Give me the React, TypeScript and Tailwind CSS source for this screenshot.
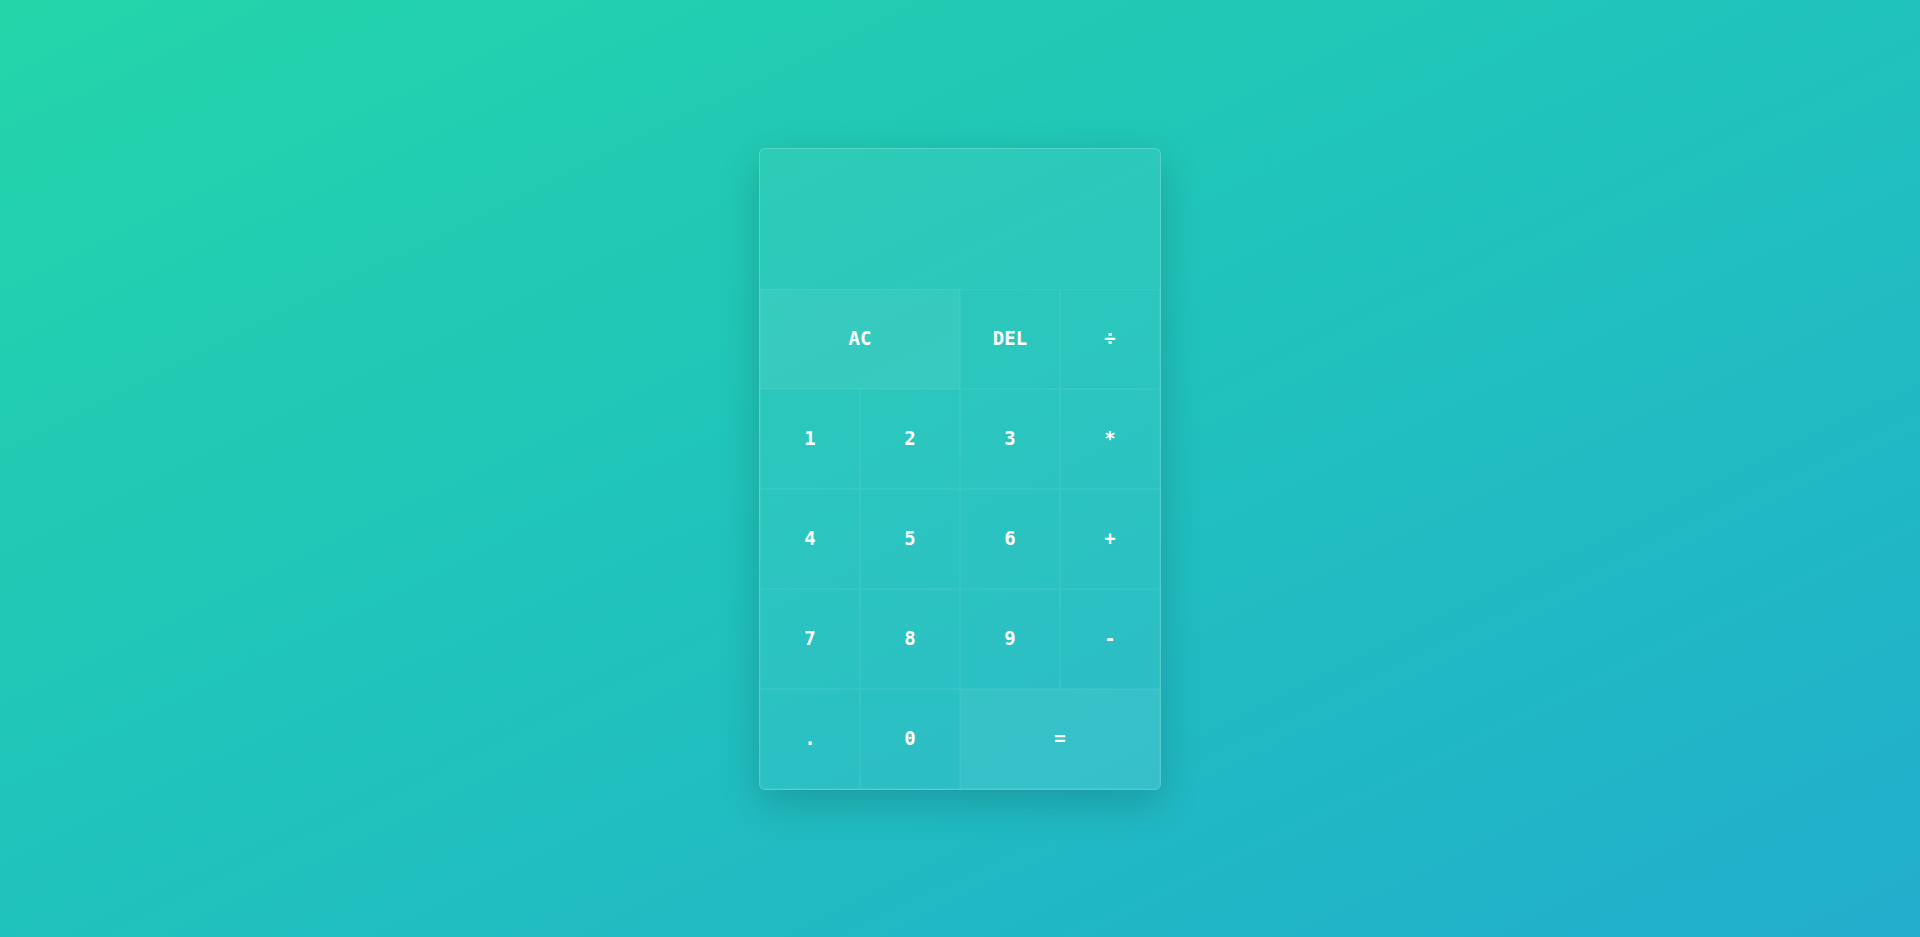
import React from "react";

const keys: { label: string; wide?: boolean }[] = [
  { label: "AC", wide: true },
  { label: "DEL" },
  { label: "÷" },
  { label: "1" },
  { label: "2" },
  { label: "3" },
  { label: "*" },
  { label: "4" },
  { label: "5" },
  { label: "6" },
  { label: "+" },
  { label: "7" },
  { label: "8" },
  { label: "9" },
  { label: "-" },
  { label: "." },
  { label: "0" },
  { label: "=", wide: true },
];

export default function App() {
  return (
    <div className="flex h-screen w-full items-center justify-center bg-gradient-to-br from-[#24d5a9] to-[#22aecd] font-['DejaVu_Sans_Mono',monospace]">
      <div className="overflow-hidden rounded-[6px] border border-white/20 bg-white/5 shadow-[0_12px_40px_rgba(0,0,0,0.18)]">
        <div className="grid w-[400px] grid-cols-4 grid-rows-[140px_repeat(5,100px)]">
          <div className="col-span-4" />
          {keys.map((k) => (
            <button
              key={k.label}
              className={
                k.wide
                  ? "col-span-2 flex items-center justify-center border-[0.5px] border-white/5 bg-white/5 text-[19px] font-bold text-white"
                  : "flex items-center justify-center border-[0.5px] border-white/5 text-[19px] font-bold text-white"
              }
            >
              {k.label}
            </button>
          ))}
        </div>
      </div>
    </div>
  );
}
